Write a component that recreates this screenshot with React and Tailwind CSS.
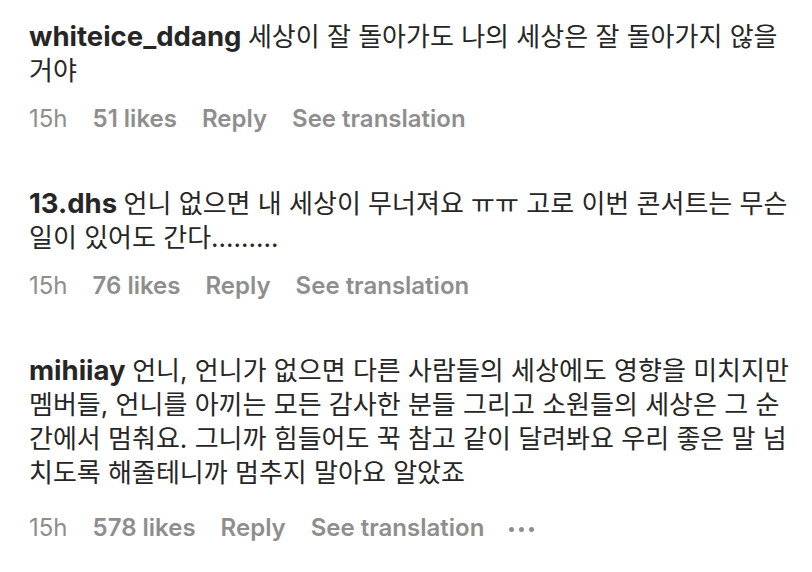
import React from 'react';

const comments = [
  {
    user: 'whiteice_ddang',
    lines: ['세상이 잘 돌아가도 나의 세상은 잘 돌아가지 않을', '거야'],
    time: '15h',
    likes: '51 likes',
  },
  {
    user: '13.dhs',
    lines: ['언니 없으면 내 세상이 무너져요 ㅠㅠ 고로 이번 콘서트는 무슨', '일이 있어도 간다.........'],
    time: '15h',
    likes: '76 likes',
  },
  {
    user: 'mihiiay',
    lines: [
      '언니, 언니가 없으면 다른 사람들의 세상에도 영향을 미치지만',
      '멤버들, 언니를 아끼는 모든 감사한 분들 그리고 소원들의 세상은 그 순',
      '간에서 멈춰요. 그니까 힘들어도 꾹 참고 같이 달려봐요 우리 좋은 말 넘',
      '치도록 해줄테니까 멈추지 말아요 알았죠',
    ],
    time: '15h',
    likes: '578 likes',
    more: true,
  },
];

function Comment({ c }) {
  return (
    <div className="flex flex-col">
      <p className="text-[26px] leading-[34px] text-[#262626]">
        {c.lines.map((line, i) => (
          <span key={i} className="block whitespace-nowrap">
            {i === 0 && <span className="font-bold text-[27.5px] leading-[34px]">{c.user} </span>}
            {line}
          </span>
        ))}
      </p>
      <div
        className={
          (c.more ? 'mt-[23px] ' : 'mt-[16px] ') +
          'flex items-center gap-[25px] text-[24px] leading-[30px] font-semibold text-[#8e8e8e]'
        }
      >
        <span className="font-normal">{c.time}</span>
        <span>{c.likes}</span>
        <span>Reply</span>
        <span>See translation</span>
        {c.more && (
          <span className="flex items-center gap-[5px] pt-[2px]">
            <span className="w-[5px] h-[5px] rounded-full bg-[#8e8e8e]" />
            <span className="w-[5px] h-[5px] rounded-full bg-[#8e8e8e]" />
            <span className="w-[5px] h-[5px] rounded-full bg-[#8e8e8e]" />
          </span>
        )}
      </div>
    </div>
  );
}

export default function App() {
  return (
    <div
      className="w-[812px] h-[572px] bg-white pl-[29px] pt-[19px] flex flex-col gap-[52px] overflow-hidden"
      style={{ fontFamily: 'Inter, "Noto Sans CJK KR", sans-serif' }}
    >
      {comments.map((c, i) => (
        <Comment key={i} c={c} />
      ))}
    </div>
  );
}
